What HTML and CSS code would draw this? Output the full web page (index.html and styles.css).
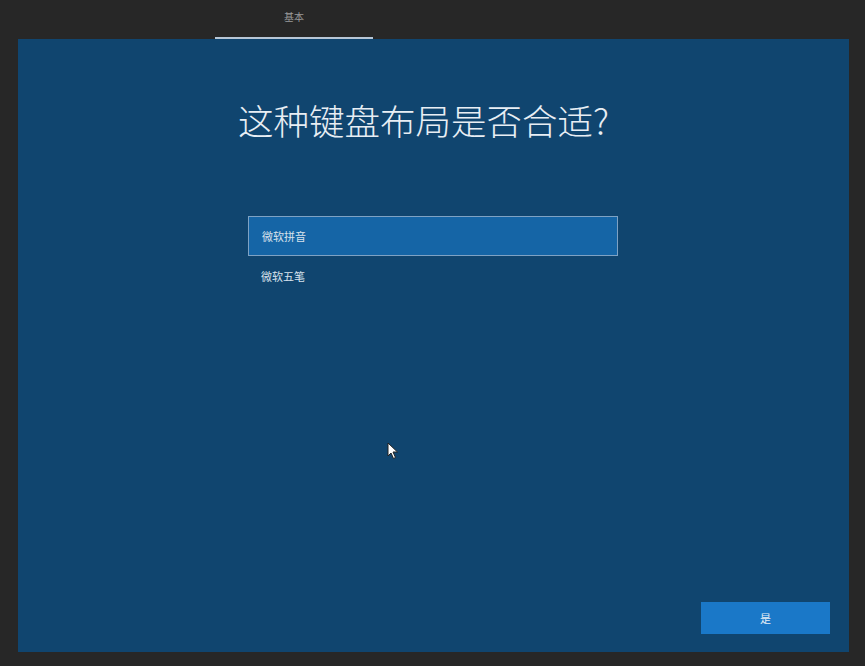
FILE: index.html
```html
<!DOCTYPE html>
<html lang="zh-CN">
  <head>
    <meta charset="UTF-8" />
    <meta name="viewport" content="width=device-width, initial-scale=1.0" />
    <title>键盘布局</title>
    <link rel="stylesheet" href="styles.css">
  </head>
  <body>
    <div class="tabs">
      <span class="tab active">基本</span>
    </div>
    <div class="panel">
      <h1 class="title">这种键盘布局是否合适?</h1>
      <ul class="list">
        <li class="item selected">微软拼音</li>
        <li class="item">微软五笔</li>
      </ul>
      <svg class="cursor" width="12" height="18" viewBox="0 0 12 18">
        <path d="M1 1 L1 14 L4 11 L6.5 16.5 L8.5 15.5 L6 10 L10.5 10 Z" fill="#fff" stroke="#222" stroke-width="1"/>
      </svg>
      <div class="footer">
        <button class="btn">是</button>
      </div>
    </div>
  </body>
</html>
```

FILE: styles.css
```css
* {
  margin: 0;
  padding: 0;
  box-sizing: border-box;
}
body {
  width: 865px;
  height: 666px;
  background: #272727;
  font-family: "Noto Sans CJK SC", "Noto Sans", sans-serif;
  overflow: hidden;
}
.tabs {
  height: 39px;
  padding-left: 215px;
  display: flex;
}
.tab {
  width: 158px;
  height: 39px;
  display: flex;
  align-items: center;
  justify-content: center;
  padding-bottom: 4px;
  color: #9a9a9a;
  font-size: 10px;
}
.tab.active {
  border-bottom: 2px solid #b7c6d6;
}
.panel {
  position: relative;
  margin-left: 18px;
  width: 831px;
  height: 613px;
  background: #10456f;
  display: flex;
  flex-direction: column;
}
.title {
  margin-top: 56px;
  padding-left: 220px;
  color: #e8eef4;
  font-weight: 300;
  font-size: 35.5px;
  line-height: 50px;
  letter-spacing: 0;
}
ul {
  list-style: none;
}
.list {
  margin-top: 71px;
  margin-left: 230px;
  width: 370px;
}
.item {
  height: 40px;
  padding-left: 13px;
  display: flex;
  align-items: center;
  color: #d8e2ec;
  font-size: 11px;
}
.item.selected {
  background: #1565a6;
  border: 1px solid #7ea2c4;
}
.cursor {
  position: absolute;
  left: 369px;
  top: 403px;
}
.footer {
  margin-top: auto;
  display: flex;
  justify-content: flex-end;
  padding: 0 19px 18px 0;
}
.btn {
  width: 129px;
  height: 32px;
  border: none;
  background: #1a78c8;
  color: #e6eef6;
  font-family: inherit;
  font-size: 11px;
}
```
